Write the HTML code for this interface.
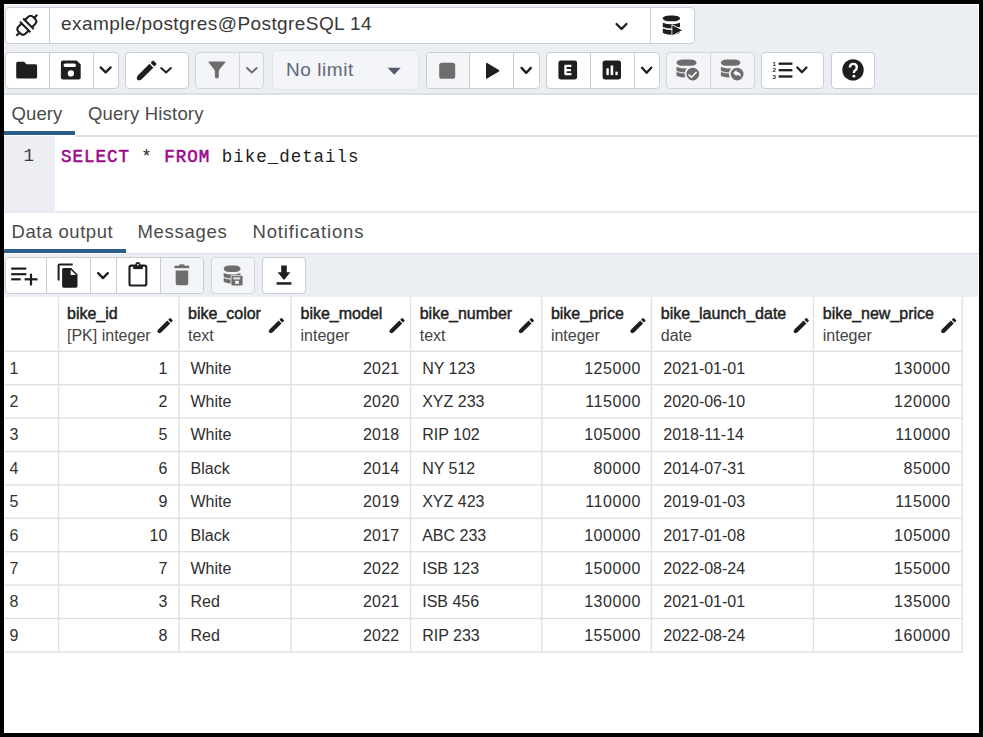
<!DOCTYPE html>
<html><head><meta charset="utf-8">
<style>
*{margin:0;padding:0;box-sizing:border-box}
html,body{width:983px;height:737px;overflow:hidden;background:#000}
body{position:relative;font-family:"Liberation Sans",sans-serif;color:#222}
.a{position:absolute}
.t{white-space:nowrap}
svg{position:absolute;left:0;top:0;overflow:visible}
</style></head><body>

<div class="a" style="left:4px;top:4px;width:975px;height:729px;background:#fff;"></div>
<div class="a" style="left:4px;top:5px;width:974px;height:88px;background:#ebeef3;"></div>
<div class="a" style="left:4px;top:93px;width:974px;height:1.6px;background:#dcdfe5;"></div>
<div class="a" style="left:5px;top:7px;width:690px;height:37px;background:#fff;border:1px solid #c8ccd3;border-radius:4px;overflow:hidden"><div class="a" style="left:43px;top:0;width:1px;height:100%;background:#c8ccd3"></div><div class="a" style="left:644px;top:0;width:1px;height:100%;background:#c8ccd3"></div></div>
<div class="a t" style="left:61px;top:12.70px;font-size:19px;line-height:21.83px;color:#383838;font-weight:normal;font-family:'Liberation Sans',sans-serif;letter-spacing:0.42px">example/postgres@PostgreSQL 14</div>
<div class="a" style="left:5px;top:52px;width:114px;height:37px;background:#fff;border:1px solid #c8ccd3;border-radius:4px;overflow:hidden"><div class="a" style="left:43px;top:0;width:1px;height:100%;background:#c8ccd3"></div><div class="a" style="left:87px;top:0;width:1px;height:100%;background:#c8ccd3"></div></div>
<div class="a" style="left:125px;top:52px;width:64px;height:37px;background:#fff;border:1px solid #c8ccd3;border-radius:4px;overflow:hidden"></div>
<div class="a" style="left:195px;top:52px;width:69px;height:37px;background:#f4f5f8;border:1px solid #d3d6dc;border-radius:4px;overflow:hidden"><div class="a" style="left:43px;top:0;width:1px;height:100%;background:#d3d6dc"></div></div>
<div class="a" style="left:272px;top:50px;width:147px;height:40px;background:#f3f5f9;border:1px solid #e3e6eb;border-radius:6px;overflow:hidden"></div>
<div class="a t" style="left:286px;top:58.50px;font-size:19px;line-height:21.83px;color:#626879;font-weight:normal;font-family:'Liberation Sans',sans-serif;letter-spacing:0.55px">No limit</div>
<div class="a" style="left:426px;top:52px;width:114px;height:37px;background:#fff;border:1px solid #c8ccd3;border-radius:4px;overflow:hidden"><div class="a" style="left:0px;top:0;width:43px;height:100%;background:#f4f5f8"></div><div class="a" style="left:42px;top:0;width:1px;height:100%;background:#c8ccd3"></div><div class="a" style="left:86px;top:0;width:1px;height:100%;background:#c8ccd3"></div></div>
<div class="a" style="left:546px;top:52px;width:114px;height:37px;background:#fff;border:1px solid #c8ccd3;border-radius:4px;overflow:hidden"><div class="a" style="left:43px;top:0;width:1px;height:100%;background:#c8ccd3"></div><div class="a" style="left:87px;top:0;width:1px;height:100%;background:#c8ccd3"></div></div>
<div class="a" style="left:666px;top:52px;width:89px;height:37px;background:#f4f5f8;border:1px solid #d3d6dc;border-radius:4px;overflow:hidden"><div class="a" style="left:43px;top:0;width:1px;height:100%;background:#d3d6dc"></div></div>
<div class="a" style="left:761px;top:52px;width:63px;height:37px;background:#fff;border:1px solid #c8ccd3;border-radius:4px;overflow:hidden"></div>
<div class="a" style="left:831px;top:52px;width:44px;height:37px;background:#fff;border:1px solid #c8ccd3;border-radius:4px;overflow:hidden"></div>
<div class="a t" style="left:11.5px;top:103.26px;font-size:18.5px;line-height:21.26px;color:#4a4a4a;font-weight:normal;font-family:'Liberation Sans',sans-serif;letter-spacing:0.1px">Query</div>
<div class="a t" style="left:88px;top:103.26px;font-size:18.5px;line-height:21.26px;color:#4a4a4a;font-weight:normal;font-family:'Liberation Sans',sans-serif;letter-spacing:0.2px">Query History</div>
<div class="a" style="left:4px;top:131px;width:71px;height:4px;background:#2c5e8a;"></div>
<div class="a" style="left:75px;top:135px;width:903px;height:1.5px;background:#dde0e6;"></div>
<div class="a" style="left:4px;top:136px;width:50.5px;height:75px;background:#eceef3;"></div>
<div class="a t" style="left:23.5px;top:145.64px;font-size:17.5px;line-height:20.11px;color:#3a3a3a;font-weight:normal;font-family:'Liberation Mono',monospace;">1</div>
<div class="a t" style="left:61px;top:146.64px;font-size:17.5px;line-height:20.11px;color:#222;font-weight:normal;font-family:'Liberation Mono',monospace;letter-spacing:0.98px"><span style="color:#990a8a;-webkit-text-stroke:0.55px #990a8a">SELECT</span> * <span style="color:#990a8a;-webkit-text-stroke:0.55px #990a8a">FROM</span> bike_details</div>
<div class="a" style="left:4px;top:211px;width:974px;height:1.5px;background:#e6e9ee;"></div>
<div class="a t" style="left:11.5px;top:220.96px;font-size:18.5px;line-height:21.26px;color:#4a4a4a;font-weight:normal;font-family:'Liberation Sans',sans-serif;letter-spacing:0.55px">Data output</div>
<div class="a t" style="left:137.5px;top:220.96px;font-size:18.5px;line-height:21.26px;color:#4a4a4a;font-weight:normal;font-family:'Liberation Sans',sans-serif;letter-spacing:0.7px">Messages</div>
<div class="a t" style="left:252.5px;top:220.96px;font-size:18.5px;line-height:21.26px;color:#4a4a4a;font-weight:normal;font-family:'Liberation Sans',sans-serif;letter-spacing:0.85px">Notifications</div>
<div class="a" style="left:4px;top:249px;width:121.5px;height:4px;background:#2c5e8a;"></div>
<div class="a" style="left:125.5px;top:253px;width:853px;height:1px;background:#dde0e6;"></div>
<div class="a" style="left:4px;top:254px;width:974px;height:43px;background:#ebeef3;"></div>
<div class="a" style="left:5px;top:257px;width:199px;height:37px;background:#fff;border:1px solid #c8ccd3;border-radius:4px;overflow:hidden"><div class="a" style="left:155px;top:0;width:44px;height:100%;background:#f4f5f8"></div><div class="a" style="left:40px;top:0;width:1px;height:100%;background:#c8ccd3"></div><div class="a" style="left:84px;top:0;width:1px;height:100%;background:#c8ccd3"></div><div class="a" style="left:110px;top:0;width:1px;height:100%;background:#c8ccd3"></div><div class="a" style="left:154px;top:0;width:1px;height:100%;background:#c8ccd3"></div></div>
<div class="a" style="left:211px;top:257px;width:44px;height:37px;background:#f4f5f8;border:1px solid #d3d6dc;border-radius:4px;overflow:hidden"></div>
<div class="a" style="left:262px;top:257px;width:44px;height:37px;background:#fff;border:1px solid #c8ccd3;border-radius:4px;overflow:hidden"></div>
<svg width="983" height="737" viewBox="0 0 983 737"><rect x="57.80" y="297" width="1.4" height="355.60" fill="#dfe0e3"/><rect x="178.30" y="297" width="1.4" height="355.60" fill="#dfe0e3"/><rect x="290.30" y="297" width="1.4" height="355.60" fill="#dfe0e3"/><rect x="409.80" y="297" width="1.4" height="355.60" fill="#dfe0e3"/><rect x="541.10" y="297" width="1.4" height="355.60" fill="#dfe0e3"/><rect x="650.80" y="297" width="1.4" height="355.60" fill="#dfe0e3"/><rect x="812.80" y="297" width="1.4" height="355.60" fill="#dfe0e3"/><rect x="961.50" y="297" width="1.4" height="355.60" fill="#dfe0e3"/><rect x="4" y="350.60" width="958.90" height="1.4" fill="#dfe0e3"/><rect x="4" y="384.00" width="958.90" height="1.4" fill="#dfe0e3"/><rect x="4" y="417.40" width="958.90" height="1.4" fill="#dfe0e3"/><rect x="4" y="450.80" width="958.90" height="1.4" fill="#dfe0e3"/><rect x="4" y="484.20" width="958.90" height="1.4" fill="#dfe0e3"/><rect x="4" y="517.60" width="958.90" height="1.4" fill="#dfe0e3"/><rect x="4" y="551.00" width="958.90" height="1.4" fill="#dfe0e3"/><rect x="4" y="584.40" width="958.90" height="1.4" fill="#dfe0e3"/><rect x="4" y="617.80" width="958.90" height="1.4" fill="#dfe0e3"/><rect x="4" y="651.20" width="958.90" height="1.4" fill="#dfe0e3"/></svg>
<div class="a t" style="left:67px;top:305.36px;font-size:16px;line-height:18.38px;color:#222;font-weight:normal;font-family:'Liberation Sans',sans-serif;-webkit-text-stroke:0.45px #222">bike_id</div>
<div class="a t" style="left:67px;top:326.56px;font-size:16px;line-height:18.38px;color:#444;font-weight:normal;font-family:'Liberation Sans',sans-serif;">[PK] integer</div>
<div class="a t" style="left:188px;top:305.36px;font-size:16px;line-height:18.38px;color:#222;font-weight:normal;font-family:'Liberation Sans',sans-serif;-webkit-text-stroke:0.45px #222">bike_color</div>
<div class="a t" style="left:188px;top:326.56px;font-size:16px;line-height:18.38px;color:#444;font-weight:normal;font-family:'Liberation Sans',sans-serif;">text</div>
<div class="a t" style="left:300.5px;top:305.36px;font-size:16px;line-height:18.38px;color:#222;font-weight:normal;font-family:'Liberation Sans',sans-serif;-webkit-text-stroke:0.45px #222">bike_model</div>
<div class="a t" style="left:300.5px;top:326.56px;font-size:16px;line-height:18.38px;color:#444;font-weight:normal;font-family:'Liberation Sans',sans-serif;">integer</div>
<div class="a t" style="left:419.7px;top:305.36px;font-size:16px;line-height:18.38px;color:#222;font-weight:normal;font-family:'Liberation Sans',sans-serif;-webkit-text-stroke:0.45px #222">bike_number</div>
<div class="a t" style="left:419.7px;top:326.56px;font-size:16px;line-height:18.38px;color:#444;font-weight:normal;font-family:'Liberation Sans',sans-serif;">text</div>
<div class="a t" style="left:550.9px;top:305.36px;font-size:16px;line-height:18.38px;color:#222;font-weight:normal;font-family:'Liberation Sans',sans-serif;-webkit-text-stroke:0.45px #222">bike_price</div>
<div class="a t" style="left:550.9px;top:326.56px;font-size:16px;line-height:18.38px;color:#444;font-weight:normal;font-family:'Liberation Sans',sans-serif;">integer</div>
<div class="a t" style="left:660.8px;top:305.36px;font-size:16px;line-height:18.38px;color:#222;font-weight:normal;font-family:'Liberation Sans',sans-serif;-webkit-text-stroke:0.45px #222">bike_launch_date</div>
<div class="a t" style="left:660.8px;top:326.56px;font-size:16px;line-height:18.38px;color:#444;font-weight:normal;font-family:'Liberation Sans',sans-serif;">date</div>
<div class="a t" style="left:822.8px;top:305.36px;font-size:16px;line-height:18.38px;color:#222;font-weight:normal;font-family:'Liberation Sans',sans-serif;-webkit-text-stroke:0.45px #222">bike_new_price</div>
<div class="a t" style="left:822.8px;top:326.56px;font-size:16px;line-height:18.38px;color:#444;font-weight:normal;font-family:'Liberation Sans',sans-serif;">integer</div>
<div class="a t" style="left:9.5px;top:359.56px;font-size:16px;line-height:18.38px;color:#333;font-weight:normal;font-family:'Liberation Sans',sans-serif;">1</div>
<div class="a t" style="left:-32.30px;width:200px;text-align:right;top:359.56px;font-size:16px;line-height:18.38px;color:#2e2e2e;letter-spacing:0.2px">1</div>
<div class="a t" style="left:190.5px;top:359.56px;font-size:16px;line-height:18.38px;color:#2e2e2e;font-weight:normal;font-family:'Liberation Sans',sans-serif;">White</div>
<div class="a t" style="left:199.40px;width:200px;text-align:right;top:359.56px;font-size:16px;line-height:18.38px;color:#2e2e2e;letter-spacing:0.2px">2021</div>
<div class="a t" style="left:422.2px;top:359.56px;font-size:16px;line-height:18.38px;color:#2e2e2e;font-weight:normal;font-family:'Liberation Sans',sans-serif;">NY 123</div>
<div class="a t" style="left:440.85px;width:200px;text-align:right;top:359.56px;font-size:16px;line-height:18.38px;color:#2e2e2e;letter-spacing:0.55px">125000</div>
<div class="a t" style="left:663.3px;top:359.56px;font-size:16px;line-height:18.38px;color:#2e2e2e;font-weight:normal;font-family:'Liberation Sans',sans-serif;">2021-01-01</div>
<div class="a t" style="left:750.75px;width:200px;text-align:right;top:359.56px;font-size:16px;line-height:18.38px;color:#2e2e2e;letter-spacing:0.55px">130000</div>
<div class="a t" style="left:9.5px;top:392.96px;font-size:16px;line-height:18.38px;color:#333;font-weight:normal;font-family:'Liberation Sans',sans-serif;">2</div>
<div class="a t" style="left:-32.30px;width:200px;text-align:right;top:392.96px;font-size:16px;line-height:18.38px;color:#2e2e2e;letter-spacing:0.2px">2</div>
<div class="a t" style="left:190.5px;top:392.96px;font-size:16px;line-height:18.38px;color:#2e2e2e;font-weight:normal;font-family:'Liberation Sans',sans-serif;">White</div>
<div class="a t" style="left:199.40px;width:200px;text-align:right;top:392.96px;font-size:16px;line-height:18.38px;color:#2e2e2e;letter-spacing:0.2px">2020</div>
<div class="a t" style="left:422.2px;top:392.96px;font-size:16px;line-height:18.38px;color:#2e2e2e;font-weight:normal;font-family:'Liberation Sans',sans-serif;">XYZ 233</div>
<div class="a t" style="left:440.85px;width:200px;text-align:right;top:392.96px;font-size:16px;line-height:18.38px;color:#2e2e2e;letter-spacing:0.55px">115000</div>
<div class="a t" style="left:663.3px;top:392.96px;font-size:16px;line-height:18.38px;color:#2e2e2e;font-weight:normal;font-family:'Liberation Sans',sans-serif;">2020-06-10</div>
<div class="a t" style="left:750.75px;width:200px;text-align:right;top:392.96px;font-size:16px;line-height:18.38px;color:#2e2e2e;letter-spacing:0.55px">120000</div>
<div class="a t" style="left:9.5px;top:426.36px;font-size:16px;line-height:18.38px;color:#333;font-weight:normal;font-family:'Liberation Sans',sans-serif;">3</div>
<div class="a t" style="left:-32.30px;width:200px;text-align:right;top:426.36px;font-size:16px;line-height:18.38px;color:#2e2e2e;letter-spacing:0.2px">5</div>
<div class="a t" style="left:190.5px;top:426.36px;font-size:16px;line-height:18.38px;color:#2e2e2e;font-weight:normal;font-family:'Liberation Sans',sans-serif;">White</div>
<div class="a t" style="left:199.40px;width:200px;text-align:right;top:426.36px;font-size:16px;line-height:18.38px;color:#2e2e2e;letter-spacing:0.2px">2018</div>
<div class="a t" style="left:422.2px;top:426.36px;font-size:16px;line-height:18.38px;color:#2e2e2e;font-weight:normal;font-family:'Liberation Sans',sans-serif;">RIP 102</div>
<div class="a t" style="left:440.85px;width:200px;text-align:right;top:426.36px;font-size:16px;line-height:18.38px;color:#2e2e2e;letter-spacing:0.55px">105000</div>
<div class="a t" style="left:663.3px;top:426.36px;font-size:16px;line-height:18.38px;color:#2e2e2e;font-weight:normal;font-family:'Liberation Sans',sans-serif;">2018-11-14</div>
<div class="a t" style="left:750.75px;width:200px;text-align:right;top:426.36px;font-size:16px;line-height:18.38px;color:#2e2e2e;letter-spacing:0.55px">110000</div>
<div class="a t" style="left:9.5px;top:459.76px;font-size:16px;line-height:18.38px;color:#333;font-weight:normal;font-family:'Liberation Sans',sans-serif;">4</div>
<div class="a t" style="left:-32.30px;width:200px;text-align:right;top:459.76px;font-size:16px;line-height:18.38px;color:#2e2e2e;letter-spacing:0.2px">6</div>
<div class="a t" style="left:190.5px;top:459.76px;font-size:16px;line-height:18.38px;color:#2e2e2e;font-weight:normal;font-family:'Liberation Sans',sans-serif;">Black</div>
<div class="a t" style="left:199.40px;width:200px;text-align:right;top:459.76px;font-size:16px;line-height:18.38px;color:#2e2e2e;letter-spacing:0.2px">2014</div>
<div class="a t" style="left:422.2px;top:459.76px;font-size:16px;line-height:18.38px;color:#2e2e2e;font-weight:normal;font-family:'Liberation Sans',sans-serif;">NY 512</div>
<div class="a t" style="left:440.85px;width:200px;text-align:right;top:459.76px;font-size:16px;line-height:18.38px;color:#2e2e2e;letter-spacing:0.55px">80000</div>
<div class="a t" style="left:663.3px;top:459.76px;font-size:16px;line-height:18.38px;color:#2e2e2e;font-weight:normal;font-family:'Liberation Sans',sans-serif;">2014-07-31</div>
<div class="a t" style="left:750.75px;width:200px;text-align:right;top:459.76px;font-size:16px;line-height:18.38px;color:#2e2e2e;letter-spacing:0.55px">85000</div>
<div class="a t" style="left:9.5px;top:493.16px;font-size:16px;line-height:18.38px;color:#333;font-weight:normal;font-family:'Liberation Sans',sans-serif;">5</div>
<div class="a t" style="left:-32.30px;width:200px;text-align:right;top:493.16px;font-size:16px;line-height:18.38px;color:#2e2e2e;letter-spacing:0.2px">9</div>
<div class="a t" style="left:190.5px;top:493.16px;font-size:16px;line-height:18.38px;color:#2e2e2e;font-weight:normal;font-family:'Liberation Sans',sans-serif;">White</div>
<div class="a t" style="left:199.40px;width:200px;text-align:right;top:493.16px;font-size:16px;line-height:18.38px;color:#2e2e2e;letter-spacing:0.2px">2019</div>
<div class="a t" style="left:422.2px;top:493.16px;font-size:16px;line-height:18.38px;color:#2e2e2e;font-weight:normal;font-family:'Liberation Sans',sans-serif;">XYZ 423</div>
<div class="a t" style="left:440.85px;width:200px;text-align:right;top:493.16px;font-size:16px;line-height:18.38px;color:#2e2e2e;letter-spacing:0.55px">110000</div>
<div class="a t" style="left:663.3px;top:493.16px;font-size:16px;line-height:18.38px;color:#2e2e2e;font-weight:normal;font-family:'Liberation Sans',sans-serif;">2019-01-03</div>
<div class="a t" style="left:750.75px;width:200px;text-align:right;top:493.16px;font-size:16px;line-height:18.38px;color:#2e2e2e;letter-spacing:0.55px">115000</div>
<div class="a t" style="left:9.5px;top:526.56px;font-size:16px;line-height:18.38px;color:#333;font-weight:normal;font-family:'Liberation Sans',sans-serif;">6</div>
<div class="a t" style="left:-32.30px;width:200px;text-align:right;top:526.56px;font-size:16px;line-height:18.38px;color:#2e2e2e;letter-spacing:0.2px">10</div>
<div class="a t" style="left:190.5px;top:526.56px;font-size:16px;line-height:18.38px;color:#2e2e2e;font-weight:normal;font-family:'Liberation Sans',sans-serif;">Black</div>
<div class="a t" style="left:199.40px;width:200px;text-align:right;top:526.56px;font-size:16px;line-height:18.38px;color:#2e2e2e;letter-spacing:0.2px">2017</div>
<div class="a t" style="left:422.2px;top:526.56px;font-size:16px;line-height:18.38px;color:#2e2e2e;font-weight:normal;font-family:'Liberation Sans',sans-serif;">ABC 233</div>
<div class="a t" style="left:440.85px;width:200px;text-align:right;top:526.56px;font-size:16px;line-height:18.38px;color:#2e2e2e;letter-spacing:0.55px">100000</div>
<div class="a t" style="left:663.3px;top:526.56px;font-size:16px;line-height:18.38px;color:#2e2e2e;font-weight:normal;font-family:'Liberation Sans',sans-serif;">2017-01-08</div>
<div class="a t" style="left:750.75px;width:200px;text-align:right;top:526.56px;font-size:16px;line-height:18.38px;color:#2e2e2e;letter-spacing:0.55px">105000</div>
<div class="a t" style="left:9.5px;top:559.96px;font-size:16px;line-height:18.38px;color:#333;font-weight:normal;font-family:'Liberation Sans',sans-serif;">7</div>
<div class="a t" style="left:-32.30px;width:200px;text-align:right;top:559.96px;font-size:16px;line-height:18.38px;color:#2e2e2e;letter-spacing:0.2px">7</div>
<div class="a t" style="left:190.5px;top:559.96px;font-size:16px;line-height:18.38px;color:#2e2e2e;font-weight:normal;font-family:'Liberation Sans',sans-serif;">White</div>
<div class="a t" style="left:199.40px;width:200px;text-align:right;top:559.96px;font-size:16px;line-height:18.38px;color:#2e2e2e;letter-spacing:0.2px">2022</div>
<div class="a t" style="left:422.2px;top:559.96px;font-size:16px;line-height:18.38px;color:#2e2e2e;font-weight:normal;font-family:'Liberation Sans',sans-serif;">ISB 123</div>
<div class="a t" style="left:440.85px;width:200px;text-align:right;top:559.96px;font-size:16px;line-height:18.38px;color:#2e2e2e;letter-spacing:0.55px">150000</div>
<div class="a t" style="left:663.3px;top:559.96px;font-size:16px;line-height:18.38px;color:#2e2e2e;font-weight:normal;font-family:'Liberation Sans',sans-serif;">2022-08-24</div>
<div class="a t" style="left:750.75px;width:200px;text-align:right;top:559.96px;font-size:16px;line-height:18.38px;color:#2e2e2e;letter-spacing:0.55px">155000</div>
<div class="a t" style="left:9.5px;top:593.36px;font-size:16px;line-height:18.38px;color:#333;font-weight:normal;font-family:'Liberation Sans',sans-serif;">8</div>
<div class="a t" style="left:-32.30px;width:200px;text-align:right;top:593.36px;font-size:16px;line-height:18.38px;color:#2e2e2e;letter-spacing:0.2px">3</div>
<div class="a t" style="left:190.5px;top:593.36px;font-size:16px;line-height:18.38px;color:#2e2e2e;font-weight:normal;font-family:'Liberation Sans',sans-serif;">Red</div>
<div class="a t" style="left:199.40px;width:200px;text-align:right;top:593.36px;font-size:16px;line-height:18.38px;color:#2e2e2e;letter-spacing:0.2px">2021</div>
<div class="a t" style="left:422.2px;top:593.36px;font-size:16px;line-height:18.38px;color:#2e2e2e;font-weight:normal;font-family:'Liberation Sans',sans-serif;">ISB 456</div>
<div class="a t" style="left:440.85px;width:200px;text-align:right;top:593.36px;font-size:16px;line-height:18.38px;color:#2e2e2e;letter-spacing:0.55px">130000</div>
<div class="a t" style="left:663.3px;top:593.36px;font-size:16px;line-height:18.38px;color:#2e2e2e;font-weight:normal;font-family:'Liberation Sans',sans-serif;">2021-01-01</div>
<div class="a t" style="left:750.75px;width:200px;text-align:right;top:593.36px;font-size:16px;line-height:18.38px;color:#2e2e2e;letter-spacing:0.55px">135000</div>
<div class="a t" style="left:9.5px;top:626.76px;font-size:16px;line-height:18.38px;color:#333;font-weight:normal;font-family:'Liberation Sans',sans-serif;">9</div>
<div class="a t" style="left:-32.30px;width:200px;text-align:right;top:626.76px;font-size:16px;line-height:18.38px;color:#2e2e2e;letter-spacing:0.2px">8</div>
<div class="a t" style="left:190.5px;top:626.76px;font-size:16px;line-height:18.38px;color:#2e2e2e;font-weight:normal;font-family:'Liberation Sans',sans-serif;">Red</div>
<div class="a t" style="left:199.40px;width:200px;text-align:right;top:626.76px;font-size:16px;line-height:18.38px;color:#2e2e2e;letter-spacing:0.2px">2022</div>
<div class="a t" style="left:422.2px;top:626.76px;font-size:16px;line-height:18.38px;color:#2e2e2e;font-weight:normal;font-family:'Liberation Sans',sans-serif;">RIP 233</div>
<div class="a t" style="left:440.85px;width:200px;text-align:right;top:626.76px;font-size:16px;line-height:18.38px;color:#2e2e2e;letter-spacing:0.55px">155000</div>
<div class="a t" style="left:663.3px;top:626.76px;font-size:16px;line-height:18.38px;color:#2e2e2e;font-weight:normal;font-family:'Liberation Sans',sans-serif;">2022-08-24</div>
<div class="a t" style="left:750.75px;width:200px;text-align:right;top:626.76px;font-size:16px;line-height:18.38px;color:#2e2e2e;letter-spacing:0.55px">160000</div>
<svg width="983" height="737" viewBox="0 0 983 737"><g transform="translate(26.8,25.3) rotate(45)" fill="none" stroke="#1e1e1e" stroke-width="2.1"><path d="M0,-14.8 V-10.4"/><path d="M-5,-2.3 V-6.6 Q-5,-10.4 -1.3,-10.4 H1.3 Q5,-10.4 5,-6.6 V-2.3"/><path d="M-7.4,-2.3 H7.4"/><path d="M-7.4,2.3 H7.4"/><path d="M-5,2.3 V6.6 Q-5,10.4 -1.3,10.4 H1.3 Q5,10.4 5,6.6 V2.3"/><path d="M0,10.4 V14.8"/></g><polyline points="616.55,23.95 621.50,28.95 626.45,23.95" fill="none" stroke="#1e1e1e" stroke-width="2.3" stroke-linejoin="round" stroke-linecap="round"/><g fill="#1e1e1e"><rect x="662.8" y="15.4" width="17.2" height="5.9" rx="7" ry="2.95"/><path d="M662.8,22.7 Q671.4,25.7 680,22.7 V26.9 Q671.4,29.9 662.8,26.9 Z"/><path d="M662.8,28.6 Q671.4,31.6 680,28.6 V32.2 Q680,33.2 678.8,33.5 Q671.4,36.2 664,33.5 Q662.8,33.2 662.8,32.2 Z"/><path d="M672.3,25.3 L682,30.3 L672.3,35.3 Z" stroke="#fff" stroke-width="1.6" stroke-linejoin="round" paint-order="stroke"/></g><path fill="#1e1e1e" d="M16.2,63.2 Q16.2,61.7 17.7,61.7 H24.2 L26.4,64.2 H35.6 Q37.1,64.2 37.1,65.7 V77 Q37.1,78.5 35.6,78.5 H17.7 Q16.2,78.5 16.2,77 Z"/><path fill="#1e1e1e" d="M60.9,62.6 Q60.9,60.6 62.9,60.6 H76.7 L80.7,64.6 V77.6 Q80.7,79.6 78.7,79.6 H62.9 Q60.9,79.6 60.9,77.6 Z"/><rect x="63.6" y="63.4" width="12.3" height="3.7" rx="1.6" fill="#fff"/><circle cx="70.9" cy="73.4" r="3.1" fill="#fff"/><polyline points="100.65,67.35 105.65,72.35 110.65,67.35" fill="none" stroke="#1e1e1e" stroke-width="2.3" stroke-linejoin="round" stroke-linecap="round"/><g transform="translate(137.20,79.90) rotate(-45) scale(1.084)" fill="#1e1e1e"><path d="M0.9,-1.6 Q-0.5,0 0.9,1.6 L3,2.5 H18.5 V-2.5 H3 Z"/><rect x="19.8" y="-2.5" width="3.4" height="5" rx="1"/></g><polyline points="161.20,68.10 166.05,72.50 170.90,68.10" fill="none" stroke="#1e1e1e" stroke-width="2" stroke-linejoin="round" stroke-linecap="round"/><path fill="#6d6d6d" d="M208.6,62.4 Q208.3,61.6 209.2,61.6 H224.6 Q225.5,61.6 225.2,62.4 L219.5,69.6 Q218.8,70.5 218.8,71.6 V76.8 Q218.8,78.6 216.85,78.6 Q214.9,78.6 214.9,76.8 V71.6 Q214.9,70.5 214.2,69.6 Z"/><polyline points="247.00,68.00 251.85,72.60 256.70,68.00" fill="none" stroke="#707070" stroke-width="2" stroke-linejoin="round" stroke-linecap="round"/><path fill="#555b6e" d="M387.7,67.8 H400.7 L394.2,74.8 Z"/><rect x="439.2" y="62.8" width="16" height="16" rx="2.6" fill="#6d6d6d"/><path fill="#1e1e1e" d="M486,63.6 Q486,62.4 487.1,63 L498.9,70 Q499.8,70.8 498.9,71.6 L487.1,78.6 Q486,79.2 486,78 Z"/><polyline points="521.55,67.85 526.20,72.85 530.85,67.85" fill="none" stroke="#1e1e1e" stroke-width="2.3" stroke-linejoin="round" stroke-linecap="round"/><rect x="558.4" y="60.6" width="18.7" height="18.8" rx="2.6" fill="#1e1e1e"/><path fill="none" stroke="#fff" stroke-width="2.3" stroke-linejoin="round" d="M571.4,65.95 H565.45 V74.15 H571.4 M565.45,70.05 H570.9"/><rect x="602.6" y="60.6" width="18.4" height="18.8" rx="2.6" fill="#1e1e1e"/><g fill="#fff"><rect x="606.4" y="68.3" width="2.4" height="6.8"/><rect x="610.6" y="65.5" width="2.6" height="9.6"/><rect x="615.4" y="71.7" width="2.3" height="3.4"/></g><polyline points="642.05,67.65 646.65,72.85 651.25,67.65" fill="none" stroke="#1e1e1e" stroke-width="2.3" stroke-linejoin="round" stroke-linecap="round"/><g fill="#6d6d6d"><rect x="676.5" y="59.5" width="20" height="6.3" rx="6.00" ry="3.15"/><path d="M676.5,66.9 Q686.5,69.9 696.5,66.9 V71.0 Q686.5,74.0 676.5,71.0 Z"/><path d="M676.5,71.9 Q686.5,74.9 696.5,71.9 V76.0 Q686.5,79.0 676.5,76.0 Z"/></g><circle cx="692.8" cy="74.05" r="7.3" fill="#6d6d6d" stroke="#f4f5f8" stroke-width="1.8"/><polyline points="688.6,74.4 691.4,77.2 696.6,72" fill="none" stroke="#fff" stroke-width="1.45"/><g fill="#6d6d6d"><rect x="720.9" y="59.5" width="19.5" height="6.3" rx="5.85" ry="3.15"/><path d="M720.9,66.9 Q730.65,69.9 740.4,66.9 V71.0 Q730.65,74.0 720.9,71.0 Z"/><path d="M720.9,71.9 Q730.65,74.9 740.4,71.9 V76.0 Q730.65,79.0 720.9,76.0 Z"/></g><circle cx="737.1" cy="74.05" r="7.3" fill="#6d6d6d" stroke="#f4f5f8" stroke-width="1.8"/><path fill="#fff" d="M733.2,73 L736.6,69.8 V71.7 Q741,71.8 740.8,77.2 Q739.5,74.8 736.6,74.8 V76.3 Z"/><g stroke="#1e1e1e" stroke-width="2.3"><path d="M778.6,63.7 H792.4"/><path d="M778.6,70.2 H792.4"/><path d="M778.6,76.5 H792.4"/></g><g fill="#1e1e1e" font-family="Liberation Sans" font-weight="bold" font-size="6.2px"><text x="772.6" y="66">1</text><text x="772.6" y="72.4">2</text><text x="772.6" y="78.9">3</text></g><polyline points="797.35,67.55 801.90,72.25 806.45,67.55" fill="none" stroke="#1e1e1e" stroke-width="2.3" stroke-linejoin="round" stroke-linecap="round"/><circle cx="853" cy="69.9" r="10.7" fill="#1e1e1e"/><path d="M849.9,67.6 Q849.9,63.9 853.3,63.9 Q856.8,63.9 856.8,67.2 Q856.8,69.2 855,70.4 Q853.9,71.2 853.9,73" fill="none" stroke="#fff" stroke-width="2.4"/><circle cx="853.9" cy="76.2" r="1.4" fill="#fff"/><g stroke="#1e1e1e" stroke-width="2.2"><path d="M11.2,268.6 H26.3"/><path d="M11.2,274.2 H26.3"/><path d="M11.2,279.3 H20.7"/><path d="M24.6,279.3 H37.5"/><path d="M31,273.7 V285.4"/></g><path d="M58.6,280.4 V265.6 Q58.6,264.6 59.6,264.6 H72.7" fill="none" stroke="#1e1e1e" stroke-width="2"/><path fill="#1e1e1e" d="M63.6,268.1 H71.2 L77.5,274.4 V286 Q77.5,287.7 75.8,287.7 H63.8 Q62.1,287.7 62.1,286 V269.6 Q62.1,268.1 63.6,268.1 Z"/><path fill="#fff" d="M70.7,269.8 V275 H75.9 Z"/><polyline points="98.15,273.15 103.00,278.15 107.85,273.15" fill="none" stroke="#1e1e1e" stroke-width="2.3" stroke-linejoin="round" stroke-linecap="round"/><rect x="129.5" y="265.6" width="16.8" height="19.9" rx="1.8" fill="none" stroke="#1e1e1e" stroke-width="2.1"/><rect x="133.2" y="265.2" width="9.6" height="3.9" fill="#1e1e1e"/><circle cx="137.9" cy="264.6" r="2.5" fill="#1e1e1e"/><circle cx="137.9" cy="264.6" r="0.9" fill="#fff"/><g fill="#6d6d6d"><rect x="174.5" y="265.7" width="14.7" height="2.5"/><rect x="179.3" y="264.4" width="5.1" height="2"/><path d="M175.7,270.6 H188.2 V283.6 Q188.2,285.3 186.5,285.3 H177.4 Q175.7,285.3 175.7,283.6 Z"/></g><g fill="#6d6d6d"><rect x="223.7" y="265.6" width="16.8" height="6.3" rx="5.04" ry="3.15"/><path d="M223.7,273.0 Q232.1,276.0 240.5,273.0 V277.1 Q232.1,280.1 223.7,277.1 Z"/><path d="M223.7,278.0 Q232.1,281.0 240.5,278.0 V282.1 Q232.1,285.1 223.7,282.1 Z"/></g><rect x="231.4" y="275.8" width="11.2" height="9.7" rx="1" fill="#6d6d6d" stroke="#f4f5f8" stroke-width="1.6" paint-order="stroke"/><rect x="235.2" y="280.8" width="3.6" height="3" fill="#fff"/><rect x="233.2" y="277.2" width="7" height="2.3" fill="#ddd"/><path fill="#1e1e1e" d="M281.2,265.6 H286.8 V272.2 H290.4 L284,279.9 L277.6,272.2 H281.2 Z"/><rect x="276.6" y="282.2" width="14.8" height="2.5" fill="#1e1e1e"/><g transform="translate(157.90,332.80) rotate(-45) scale(0.83)" fill="#1e1e1e"><path d="M0.9,-1.6 Q-0.5,0 0.9,1.6 L3,2.5 H18.5 V-2.5 H3 Z"/><rect x="19.8" y="-2.5" width="3.4" height="5" rx="1"/></g><g transform="translate(269.20,332.80) rotate(-45) scale(0.83)" fill="#1e1e1e"><path d="M0.9,-1.6 Q-0.5,0 0.9,1.6 L3,2.5 H18.5 V-2.5 H3 Z"/><rect x="19.8" y="-2.5" width="3.4" height="5" rx="1"/></g><g transform="translate(389.90,332.80) rotate(-45) scale(0.83)" fill="#1e1e1e"><path d="M0.9,-1.6 Q-0.5,0 0.9,1.6 L3,2.5 H18.5 V-2.5 H3 Z"/><rect x="19.8" y="-2.5" width="3.4" height="5" rx="1"/></g><g transform="translate(519.20,332.80) rotate(-45) scale(0.83)" fill="#1e1e1e"><path d="M0.9,-1.6 Q-0.5,0 0.9,1.6 L3,2.5 H18.5 V-2.5 H3 Z"/><rect x="19.8" y="-2.5" width="3.4" height="5" rx="1"/></g><g transform="translate(630.80,332.80) rotate(-45) scale(0.83)" fill="#1e1e1e"><path d="M0.9,-1.6 Q-0.5,0 0.9,1.6 L3,2.5 H18.5 V-2.5 H3 Z"/><rect x="19.8" y="-2.5" width="3.4" height="5" rx="1"/></g><g transform="translate(794.10,332.80) rotate(-45) scale(0.83)" fill="#1e1e1e"><path d="M0.9,-1.6 Q-0.5,0 0.9,1.6 L3,2.5 H18.5 V-2.5 H3 Z"/><rect x="19.8" y="-2.5" width="3.4" height="5" rx="1"/></g><g transform="translate(941.50,332.80) rotate(-45) scale(0.83)" fill="#1e1e1e"><path d="M0.9,-1.6 Q-0.5,0 0.9,1.6 L3,2.5 H18.5 V-2.5 H3 Z"/><rect x="19.8" y="-2.5" width="3.4" height="5" rx="1"/></g></svg>
</body></html>
